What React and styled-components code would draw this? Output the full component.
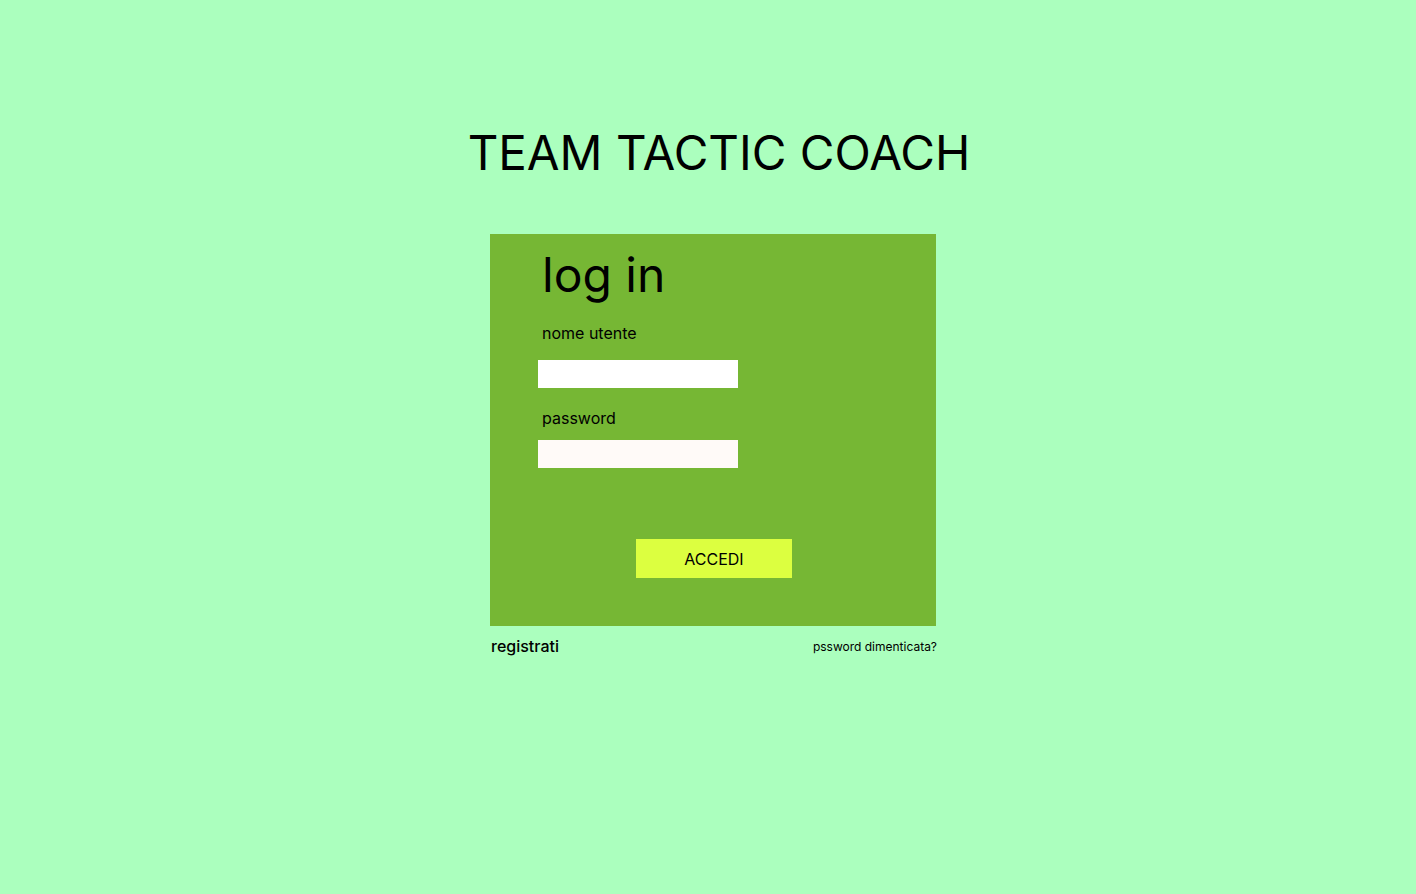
import React from 'react';
import styled, { createGlobalStyle } from 'styled-components';

const GlobalStyle = createGlobalStyle`
	html, body {
		margin: 0;
		padding: 0;
		background: #abffbe;
		font-family: Inter, "Noto Sans", sans-serif;
		color: #000;
	}
`;

const Page = styled.main`
	min-height: 894px;
	display: flex;
	flex-direction: column;
	align-items: center;
`;

const Title = styled.h1`
	margin: 124px 0 0 22px;
	font-size: 47.5px;
	font-weight: 400;
	line-height: 58px;
	letter-spacing: 0;
`;

const Wrap = styled.div`
	width: 446px;
	margin: 52px 0 0 10px;
`;

const Card = styled.form`
	height: 392px;
	box-sizing: border-box;
	background: #76b734;
	padding: 12px 0 0 48px;
	display: flex;
	flex-direction: column;
`;

const Heading = styled.h2`
	margin: 0 0 0 4px;
	font-size: 48px;
	font-weight: 400;
	line-height: 58px;
`;

const Label = styled.label`
	margin: ${(p) => p.$top}px 0 0 4px;
	font-size: 16px;
	line-height: 20px;
`;

const Input = styled.input`
	width: 200px;
	height: 28px;
	box-sizing: border-box;
	margin-top: ${(p) => p.$top}px;
	border: none;
	outline: none;
	padding: 0 6px;
	background: ${(p) => p.$bg};
	font-family: inherit;
	font-size: 14px;
`;

const Button = styled.button`
	align-self: flex-start;
	margin: 71px 0 0 98px;
	width: 156px;
	height: 39px;
	border: none;
	background: #dcff40;
	font-family: inherit;
	font-size: 16px;
	color: #000;
	cursor: pointer;
`;

const Footer = styled.div`
	display: flex;
	justify-content: space-between;
	align-items: center;
	margin-top: 10px;
	padding-left: 1px;
	width: 446px;
`;

const Register = styled.a`
	font-size: 16px;
	font-weight: 500;
	color: #000;
	text-decoration: none;
`;

const Forgot = styled.a`
	font-size: 12px;
	color: #000;
	text-decoration: none;
`;

const App = () => (
	<>
		<GlobalStyle />
		<Page>
			<Title>TEAM TACTIC COACH</Title>
			<Wrap>
				<Card onSubmit={(e) => e.preventDefault()}>
					<Heading>log in</Heading>
					<Label htmlFor="user" $top={19}>nome utente</Label>
					<Input id="user" type="text" $top={17} $bg="#ffffff" />
					<Label htmlFor="pass" $top={20}>password</Label>
					<Input id="pass" type="password" $top={12} $bg="#fffaf8" />
					<Button type="submit">ACCEDI</Button>
				</Card>
				<Footer>
					<Register href="#">registrati</Register>
					<Forgot href="#">pssword dimenticata?</Forgot>
				</Footer>
			</Wrap>
		</Page>
	</>
);

export default App;
